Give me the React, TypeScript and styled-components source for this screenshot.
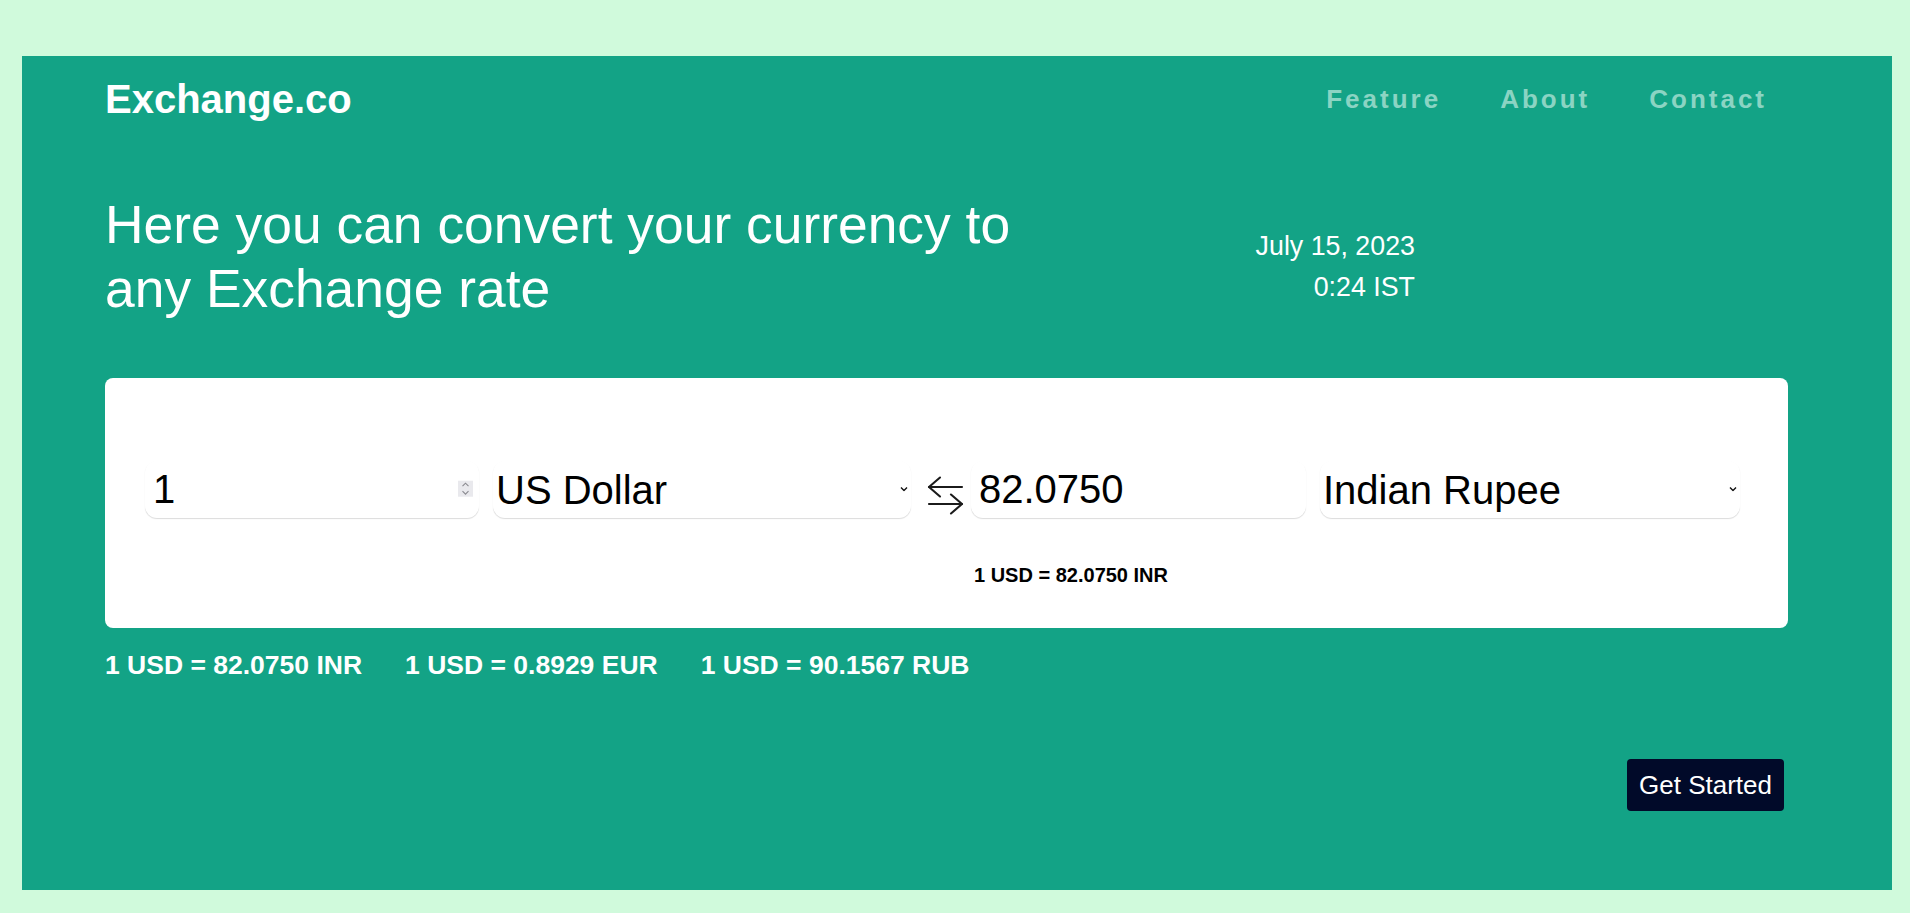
import React from "react";
import styled, { createGlobalStyle } from "styled-components";

const GlobalStyle = createGlobalStyle`
  html, body { margin: 0; padding: 0; }
  body {
    background: #d0fadc;
    font-family: "Liberation Sans", Arial, sans-serif;
  }
  * { box-sizing: border-box; }
`;

const Page = styled.div`
  padding: 56px 18px 23px 22px;
`;

const Panel = styled.main`
  background: #13a386;
  padding: 20px 104px 79px 83px;
  color: #ffffff;
`;

const Header = styled.header`
  display: flex;
  justify-content: space-between;
  align-items: center;
`;

const Logo = styled.h1`
  margin: 0;
  font-size: 40px;
  line-height: 46px;
  font-weight: 700;
  color: #ffffff;
`;

const Nav = styled.nav`
  display: flex;
  gap: 59px;
  margin-right: 21px;
`;

const NavLink = styled.a`
  font-size: 26px;
  font-weight: 700;
  letter-spacing: 3px;
  color: #8bd4c3;
  text-decoration: none;
  cursor: pointer;
`;

const Hero = styled.section`
  display: flex;
  align-items: flex-start;
  margin-top: 71px;
`;

const Heading = styled.h2`
  margin: 0;
  width: 960px;
  font-size: 53.4px;
  line-height: 63.5px;
  font-weight: 400;
`;

const DateBlock = styled.div`
  width: 350px;
  text-align: right;
  font-size: 26.8px;
  line-height: 40.5px;
  padding-top: 33px;
`;

const Card = styled.div`
  margin-top: 58px;
  background: #ffffff;
  border-radius: 8px;
  padding: 83px 48px 41px 40px;
  color: #000;
`;

const ConverterGrid = styled.div`
  display: grid;
  grid-template-columns: 334px 418px 32px 335px 1fr;
  column-gap: 14px;
  row-gap: 46px;
  align-items: center;
`;

const FieldWrap = styled.div`
  position: relative;
  height: 57px;
`;

const fieldBase = `
  width: 100%;
  height: 57px;
  border: none;
  outline: none;
  background: #ffffff;
  border-radius: 12px;
  box-shadow: 0 1px 1px rgba(0, 0, 0, 0.14);
  font-family: "Liberation Sans", Arial, sans-serif;
  font-size: 40px;
  color: #000;
  padding: 0 5px;
`;

const AmountInput = styled.input`
  ${fieldBase}
  padding-left: 8px;
  &::-webkit-inner-spin-button,
  &::-webkit-outer-spin-button {
    -webkit-appearance: none;
    margin: 0;
  }
`;

const CurrencySelect = styled.select`
  ${fieldBase}
  appearance: none;
  -webkit-appearance: none;
  padding-left: 3px;
`;

const Spinner = styled.span`
  position: absolute;
  right: 6px;
  top: 50%;
  transform: translateY(-58%);
  width: 15px;
  height: 16px;
  background: #e9e9ed;
  display: flex;
  align-items: center;
  justify-content: center;
`;

const Chevron = styled.span`
  position: absolute;
  right: 3px;
  top: 50%;
  transform: translateY(-70%);
  display: flex;
  pointer-events: none;
`;

const SwapIcon = styled.div`
  display: flex;
  margin-left: 1px;
  margin-top: 10px;
  & > svg { flex-shrink: 0; }
`;

const InlineRate = styled.div`
  grid-column: 4 / -1;
  padding-left: 3px;
  font-size: 20px;
  line-height: 23px;
  font-weight: 700;
`;

const Rates = styled.div`
  display: flex;
  gap: 43px;
  margin-top: 22px;
  font-size: 26.5px;
  line-height: 30.5px;
  font-weight: 700;
`;

const Actions = styled.div`
  display: flex;
  justify-content: flex-end;
  margin-top: 78.5px;
  padding-right: 4px;
`;

const StartButton = styled.button`
  background: #010a29;
  color: #ffffff;
  border: none;
  border-radius: 4px;
  height: 52px;
  padding: 0 12px;
  font-family: "Liberation Sans", Arial, sans-serif;
  font-size: 26px;
  cursor: pointer;
`;

const SpinGlyph = () => (
  <svg width="9" height="14" viewBox="0 0 9 14" fill="none" stroke="#8a8a90" strokeWidth="1.1">
    <path d="M1.5 4.5 L4.5 1.5 L7.5 4.5" />
    <path d="M1.5 9.5 L4.5 12.5 L7.5 9.5" />
  </svg>
);

const ChevronDown = () => (
  <svg width="8" height="5" viewBox="0 0 8 5" fill="none" stroke="#111" strokeWidth="1.4">
    <path d="M1 1 L4 4 L7 1" />
  </svg>
);

const Swap = () => (
  <svg width="38" height="40" viewBox="0 0 38 40" fill="none" stroke="#1b1b1b" strokeWidth="2.1" strokeLinecap="round" strokeLinejoin="round">
    <path d="M3 12 H36" />
    <path d="M14 2.5 L3 12 L14 21.5" />
    <path d="M3 29 H36" />
    <path d="M25 19.5 L36 29 L25 38.5" />
  </svg>
);

const currencies = ["US Dollar", "Indian Rupee", "Euro", "Russian Ruble"];

export default function App() {
  return (
    <>
      <GlobalStyle />
      <Page>
        <Panel>
          <Header>
            <Logo>Exchange.co</Logo>
            <Nav>
              <NavLink>Feature</NavLink>
              <NavLink>About</NavLink>
              <NavLink>Contact</NavLink>
            </Nav>
          </Header>

          <Hero>
            <Heading>Here you can convert your currency to any Exchange rate</Heading>
            <DateBlock>
              <div>July 15, 2023</div>
              <div>0:24 IST</div>
            </DateBlock>
          </Hero>

          <Card>
            <ConverterGrid>
              <FieldWrap>
                <AmountInput type="number" defaultValue={1} />
                <Spinner>
                  <SpinGlyph />
                </Spinner>
              </FieldWrap>
              <FieldWrap>
                <CurrencySelect defaultValue="US Dollar">
                  {currencies.map((c) => (
                    <option key={c}>{c}</option>
                  ))}
                </CurrencySelect>
                <Chevron>
                  <ChevronDown />
                </Chevron>
              </FieldWrap>
              <SwapIcon>
                <Swap />
              </SwapIcon>
              <FieldWrap>
                <AmountInput type="text" defaultValue="82.0750" readOnly />
              </FieldWrap>
              <FieldWrap>
                <CurrencySelect defaultValue="Indian Rupee">
                  {currencies.map((c) => (
                    <option key={c}>{c}</option>
                  ))}
                </CurrencySelect>
                <Chevron>
                  <ChevronDown />
                </Chevron>
              </FieldWrap>
              <InlineRate>1 USD = 82.0750 INR</InlineRate>
            </ConverterGrid>
          </Card>

          <Rates>
            <span>1 USD = 82.0750 INR</span>
            <span>1 USD = 0.8929 EUR</span>
            <span>1 USD = 90.1567 RUB</span>
          </Rates>

          <Actions>
            <StartButton>Get Started</StartButton>
          </Actions>
        </Panel>
      </Page>
    </>
  );
}
